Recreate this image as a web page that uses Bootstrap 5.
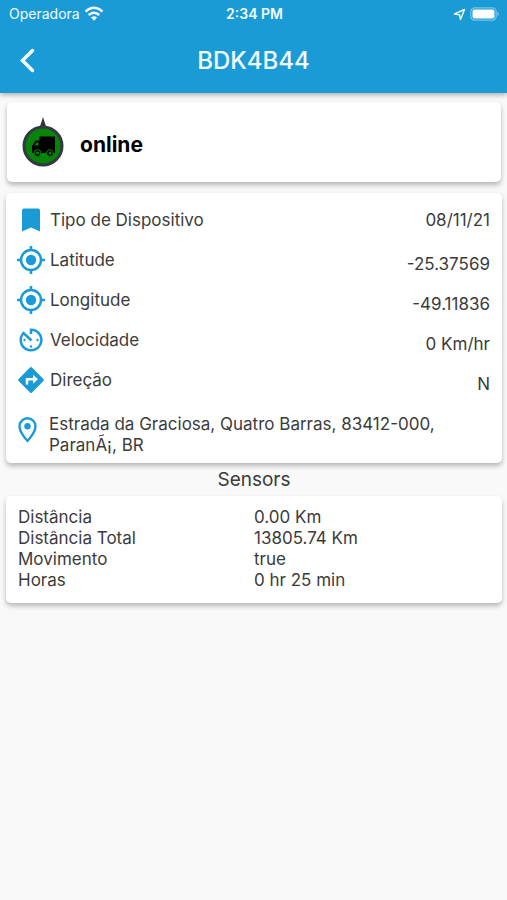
<!DOCTYPE html>
<html lang="pt-BR">
<head>
<meta charset="utf-8">
<meta name="viewport" content="width=device-width, initial-scale=1">
<title>BDK4B44</title>
<link href="https://cdn.jsdelivr.net/npm/bootstrap@5.3.0/dist/css/bootstrap.min.css" rel="stylesheet">
<style>
  body { background: #f9f9f9; color: #3b3b3b; font: 17px/21px Inter, "Liberation Sans", sans-serif; }
  svg { display: block; flex: none; }
  .app-top { background: #1b9bd6; color: #f2fbff; box-shadow: 0 2px 5px rgba(0,0,0,.3); }
  .status { height: 28px; font-size: 14px; line-height: 18px; padding: 0 7px 0 9px; }
  .status > * { flex: 1 1 0; }
  .clock { font-weight: 600; }
  .titlebar { height: 65px; padding: 0 16px; }
  .titlebar h1 { font-size: 24px; line-height: 28px; font-weight: 500; }
  .back { width: 24px; height: 32px; color: inherit; }
  .side { width: 24px; }
  .page { padding: 9px 5px 24px 6px; }
  .panel { background: #fff; border: 0; border-radius: 5px; box-shadow: 0 3px 5px rgba(0,0,0,.27); }
  .state { height: 80px; padding: 0 15px; gap: 16px; margin: 0 1px; }
  .state strong { font-size: 21px; line-height: 24px; padding-top: 6px; color: #000; }
  .facts { color: #1b9bd6; padding: 7px 12px 7px 11px; margin-top: 11px; }
  .fact { height: 40px; gap: 4px; }
  .fact dt, .fact dd, .facts address { color: #3b3b3b; font-weight: 400; margin: 0; }
  .fact dd { padding-top: 8px; }
  .fact:first-child dd { padding-top: 0; }
  .facts address { margin-top: 14px; }
  .place { gap: 11px; }
  .section-title { font-size: 19px; line-height: 24px; font-weight: 400; padding: 5px 0 4px; }
  .sensors { padding: 11px 12px 12px; }
  .sensors th, .sensors td { padding: 0; font-weight: 400; width: 50%; color: #3b3b3b; }
</style>
</head>
<body>
<header class="app-top">
  <div class="status d-flex align-items-center">
    <div class="d-flex align-items-center gap-1">Operadora
      <svg width="20" height="16" viewBox="0 0 20 16" fill="none" stroke="currentColor" stroke-width="2.4" aria-hidden="true"><path d="M1.500 5.600Q10-2 18.500 5.600M4.700 9Q10 4.300 15.300 9"/><path d="M7 11.600Q10 9 13 11.600L10 14.700Z" fill="currentColor" stroke="none"/></svg>
    </div>
    <div class="clock text-center">2:34 PM</div>
    <div class="d-flex align-items-center justify-content-end gap-1">
      <svg width="13" height="13" viewBox="0 0 13 13" fill="none" stroke="currentColor" stroke-width="1.400" stroke-linejoin="round" aria-hidden="true"><path d="M1.500 6 11.500 1.500 7.500 11.500 6.500 6.700Z"/></svg>
      <svg width="30" height="14" viewBox="0 0 30 14" aria-hidden="true"><rect x=".8" y=".8" width="25.400" height="12.400" rx="4" fill="none" stroke="#79c7ea" stroke-width="1.200"/><rect x="2.500" y="2.500" width="22" height="9" rx="2" fill="#fff"/><path d="M27.500 4.800q3 2.200 0 4.400z" fill="#79c7ea"/></svg>
    </div>
  </div>
  <div class="titlebar d-flex align-items-center justify-content-between">
    <button class="back btn border-0 p-0 d-flex align-items-center justify-content-center" type="button" aria-label="Voltar">
      <svg width="20" height="28" viewBox="0 0 20 28" fill="none" stroke="currentColor" stroke-width="3.500" stroke-linecap="round" aria-hidden="true"><path d="M14.500 3.500 4.500 13.500 14.500 23.500"/></svg>
    </button>
    <h1 class="m-0">BDK4B44</h1>
    <span class="side"></span>
  </div>
</header>
<main class="page">
  <section class="panel state d-flex align-items-center">
    <svg width="42" height="52" viewBox="0 0 42 52" aria-hidden="true"><path d="M17.500 12 21 1 24.500 12Z" fill="#333"/><circle cx="21" cy="30" r="19" fill="#078307" stroke="#333940" stroke-width="3"/><path d="M17.500 20.500H33V37H10V30L13.500 24.500H17.500Z" fill="#000"/><path d="M14.500 26.500H16.500V29.500H12.600Z" fill="#078307"/><g fill="#000" stroke="#078307" stroke-width="1"><circle cx="15.500" cy="37" r="3.400"/><circle cx="28" cy="37" r="3.400"/></g><g fill="#078307"><circle cx="15.500" cy="37" r="1.500"/><circle cx="28" cy="37" r="1.500"/></g></svg>
    <strong>online</strong>
  </section>
  <section class="panel facts">
    <dl class="m-0">
      <div class="fact d-flex align-items-center"><svg width="29" height="28" viewBox="0 0 29 28" fill="currentColor" aria-hidden="true"><path d="M7 2.500h14a2 2 0 0 1 2 2v21l-9-4-9 4v-21a2 2 0 0 1 2-2z"/></svg><dt>Tipo de Dispositivo</dt><dd class="ms-auto">08/11/21</dd></div>
      <div class="fact d-flex align-items-center"><svg width="29" height="28" viewBox="0 0 29 28" fill="none" stroke="currentColor" stroke-width="2.500" aria-hidden="true"><circle cx="14" cy="14" r="10"/><circle cx="14" cy="14" r="5.200" fill="currentColor" stroke="none"/><path d="M14 0v4M14 24v4M0 14h4M24 14h4"/></svg><dt>Latitude</dt><dd class="ms-auto">-25.37569</dd></div>
      <div class="fact d-flex align-items-center"><svg width="29" height="28" viewBox="0 0 29 28" fill="none" stroke="currentColor" stroke-width="2.500" aria-hidden="true"><circle cx="14" cy="14" r="10"/><circle cx="14" cy="14" r="5.200" fill="currentColor" stroke="none"/><path d="M14 0v4M14 24v4M0 14h4M24 14h4"/></svg><dt>Longitude</dt><dd class="ms-auto">-49.11836</dd></div>
      <div class="fact d-flex align-items-center"><svg width="29" height="28" viewBox="0 0 29 28" fill="none" stroke="currentColor" stroke-width="2.500" aria-hidden="true"><path d="M14 8V3.700A10.300 10.300 0 1 1 6.500 7L14.500 14.500"/><g fill="currentColor" stroke="none"><circle cx="7.500" cy="14" r="1.200"/><circle cx="20.500" cy="14" r="1.200"/><circle cx="14" cy="20.500" r="1.200"/></g></svg><dt>Velocidade</dt><dd class="ms-auto">0 Km/hr</dd></div>
      <div class="fact d-flex align-items-center"><svg width="29" height="28" viewBox="0 0 29 28" aria-hidden="true"><path d="M13 1.600q1-1 2 0l11.400 11.400q1 1 0 2L15 26.400q-1 1-2 0L1.600 15q-1-1 0-2z" fill="currentColor"/><path d="M10 18.500v-5.200h7" fill="none" stroke="#fff" stroke-width="2.500"/><path d="M16 8.800 21 13.300 16 17.800Z" fill="#fff"/></svg><dt>Direção</dt><dd class="ms-auto">N</dd></div>
    </dl>
    <div class="place d-flex align-items-center">
      <svg class="mt-1" width="21" height="28" viewBox="0 0 21 28" fill="none" stroke="currentColor" stroke-width="2.400" aria-hidden="true"><path d="M10.500 25Q2.500 16 2.500 10.200a8 8 0 0 1 16 0Q18.500 16 10.500 25Z"/><circle cx="10.500" cy="10.200" r="3.200" fill="currentColor" stroke="none"/></svg>
      <address>Estrada da Graciosa, Quatro Barras, 83412-000, ParanÃ¡, BR</address>
    </div>
  </section>
  <h2 class="section-title text-center m-0">Sensors</h2>
  <section class="panel sensors">
    <table class="w-100">
      <tbody>
        <tr><th scope="row">Distância</th><td>0.00 Km</td></tr>
        <tr><th scope="row">Distância Total</th><td>13805.74 Km</td></tr>
        <tr><th scope="row">Movimento</th><td>true</td></tr>
        <tr><th scope="row">Horas</th><td>0 hr 25 min</td></tr>
      </tbody>
    </table>
  </section>
</main>
<script src="https://cdn.jsdelivr.net/npm/bootstrap@5.3.0/dist/js/bootstrap.bundle.min.js"></script>
</body>
</html>
